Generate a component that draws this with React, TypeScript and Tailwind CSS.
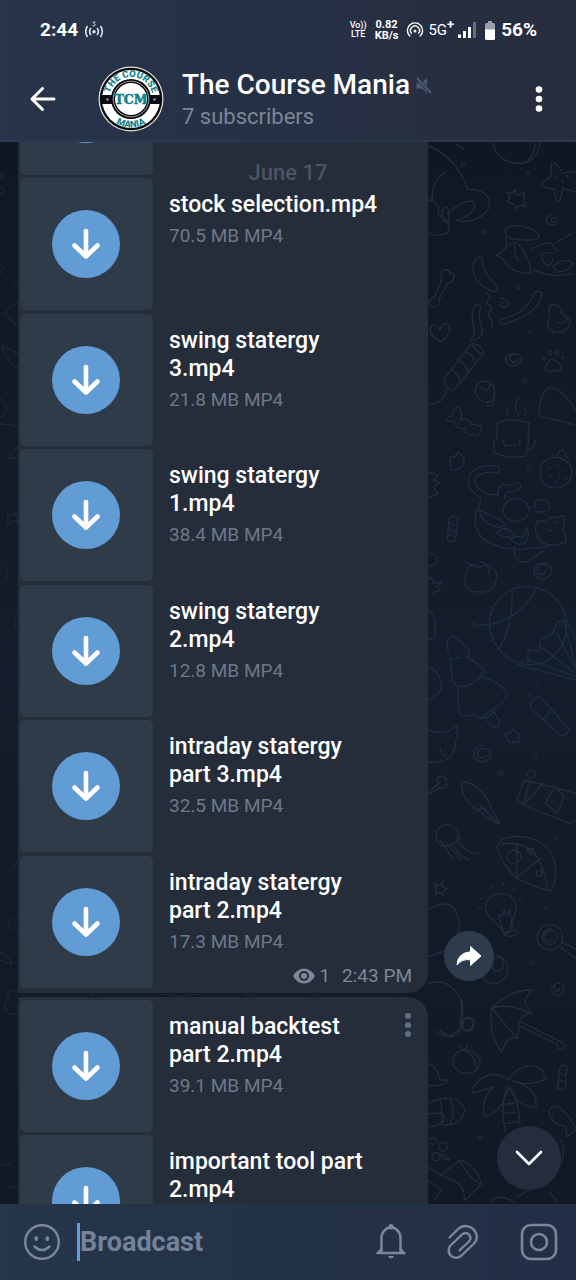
import type { ReactNode } from 'react'

interface FileItem {
  name: string
  size: string
}

interface FileRowProps {
  file: FileItem
  menu?: boolean
  footer?: ReactNode
}

const FIRST_GROUP: FileItem[] = [
  { name: 'stock selection.mp4', size: '70.5 MB MP4' },
  { name: 'swing statergy 3.mp4', size: '21.8 MB MP4' },
  { name: 'swing statergy 1.mp4', size: '38.4 MB MP4' },
  { name: 'swing statergy 2.mp4', size: '12.8 MB MP4' },
  { name: 'intraday statergy part 3.mp4', size: '32.5 MB MP4' },
  { name: 'intraday statergy part 2.mp4', size: '17.3 MB MP4' },
]

const SECOND_GROUP: FileItem[] = [
  { name: 'manual backtest part 2.mp4', size: '39.1 MB MP4' },
  { name: 'important tool part 2.mp4', size: '' },
]

function Wallpaper() {
  return (
    <svg
      className="absolute inset-0 h-full w-full"
      viewBox="0 142 576 1062"
      preserveAspectRatio="xMaxYMin slice"
      fill="none"
      stroke="#232c3a"
      strokeWidth="4"
      strokeLinecap="round"
      strokeLinejoin="round"
      aria-hidden="true"
    >
      <g transform="translate(420 140) scale(.3333)">
        {/* whale, ball, starfish */}
        <path d="M24 18c60 20 105 80 118 130 30 0 66 8 66 44 0 34-50 58-100 50 20-6 58-24 56-46-4-26-44-10-78 24M36 182c0-40 14-70 40-86M24 180c30 6 36 26 30 44 26 8 40 30 28 54-20 12-44 10-58 0M70 204q20-6 14 16 10 24-10 26-14-20-4-42" />
        <path d="M220 12c6 36 40 60 80 58 34-2 60-30 58-62M345 12q0 28-20 46M110 14l20 12" />
        <path d="M400 66q22 16 26 34 20-6 42-4M394 70q2 24-4 42-20 10-26 22 12 14 38 12l6 36q10 8 14-10l6-26 40 10M406 110l4 6M426 120l4 6M440 106l6 6" />
        <path d="M284 148l6 18 24-8-4 22 6 18-18-2-10 10-8-14-18-6 8-14-10-16 18 4zM398 224c-18-6-28 26-6 30 24 4 24-26 6-20-12 6-2 18 4 8" />
        {/* sleeping cat */}
        <path d="M260 262c30-12 90 0 98 30-12 14-80 10-98-4-6-10-4-20 0-26zM258 290q4 22 0 34l-28 22q26 10 30 28 30 30 74 26-10-60-44-92-20 2-34 14M284 306q-4 40 12 58M334 330q20-20 58-22l20 26M412 306l44-26M400 340q-50-10-30 24 20 24 28-4M400 380q30-30 60-10-10 26-50 26zM340 388q50 28 120 12" />
        {/* bone, streamers, chick */}
        <path d="M66 418c-12-24 14-40 24-20 20 0 14 30-6 30L56 480q4 20-16 22-14-6-14-18l18-14zM162 366q10-22 26-10-6 34 40 80 6 22-8 18-40-10-58-50-6-20 0-38zM160 506q10-20 22-8-10 34 6 72 0 26-36 32 16-20 10-40-10-30-2-56zM340 464q10-18 26-4-4 60-118 94-16-6-8-16 80-16 100-74zM200 460q14 8 4 18-6 10 4 18 12 10 2 20t2 20 0 30" />
        <path d="M386 512c0-26 38-24 38 2-6 14 20 10 26 30 0 40-60 44-68 8 0-20 16-18 4-40zM412 546q20 12 32-12M400 574v8M428 574v8M240 476c26-6 34 24 12 26-20-4-8-20 0-12M40 556c-20 10-8 34 24 50 34-30 28-60 8-54-10 6-12 20-14 20-2-14-8-20-18-16z" />
        <path d="M72 718l82-106q30-2 38 26l-90 112q-28 0-30-32zM94 690q24 10 26 40M116 662q26 10 28 38M136 636q28 8 30 38M160 612q0 22 30 30M80 750q-10 44-56 44" />
        <path d="M280 640c-34 4-28 40 2 38 32-6 28-46-6-34-20 16 10 34 18 14M386 664q-20 24 0 30 22-4 34 0 10-24-14-32-8-12-20 2zM372 652q-8 6 2 8zM388 632q-6 14 4 14 8-14-4-14zM410 630q-8 14 2 14 8-10-2-14zM428 650q-8 6 4 2" />
        <path d="M170 766c-20-50 56-60 54-8 0 40-38 34-54 8zM180 740q20 24 32-8M206 782l-4 16 18 2v-18M78 842q4-16 22-14-4-20 14-28 16 16 8 40 24-10 30 12l32 6q0 40-30 26-24-4-20-20-24 6-32-20zM356 830q4-76 30-86 40-4 82 70M356 830q50 6 106 24M232 848l-2 50M232 848q40-16 96 0l-4 50M262 826q-6-12 2-20M296 824q-20-20 0-54M314 826q10-12-2-24" />
      </g>

      <g transform="translate(420 440) scale(.3333)" stroke="#202d41">
        {/* mug, berry */}
        <path d="M222 0v38q40 20 96 10l8-48M326 30q18-4 20-28M250 0l4 18 46-4-2-14M90 50q20 2 24-14 28 20 14 42-16 16-36 10zM364 76q20-30 54-22 40 12 38 48-8 44-62 40-42-10-30-66zM412 50q4-24 18-20l6 16 10 14M386 80l4 6M410 76l4 6M434 90l4 6M390 106l4 6M416 102l4 6M440 112l-4 6M406 124l4 4" />
        {/* cat with a ring */}
        <path d="M236 98q6-18-10-20c-60-2-84 16-80 56q10 24 36 40l-4 24c-20 30-18 74 18 104q60 34 130 24l60-6M236 98q-60-6-72 20 6 34 40 44l30 4q0-30 16-34 28 6 30 0 24-10 22 10-4 12-36 14-16 0-12 20M250 210a38 34 0 1 0 76 0 38 34 0 1 0-76 0M326 200q14 6 20 0-8-22 20-22 30 6 20 32-20 10-40 4M178 208q30 20 60 30 34 20-4 24-36-8-50-32zM230 280q20-24 44-6l6 20-30-4zM352 242q30 4 36-8l46-6-4 44q12 24 6 36-60 20-82-16-14-20-2-50zM376 250l12-4M404 246l12 4M384 272h10M282 320l2 30q26 30 50 6l38-24M274 300q10-20 36-6l10-30q10 20 0 40-20 20-46-4" />
        <path d="M82 300l6-66q18-12 26 4l-8 62q-12 10-24 0zM90 250l18 6M88 268l18 6M86 284l18 6M150 376q10-6 26 6 40-20 54 20 0 50-40 54-60 4-54-40 0-24 14-34zM140 368q20 10 40 16M180 364q30 6 28 40M380 370c-50-6-48 46-12 48 36-6 34-54-6-44-26 20 6 44 14 20" />
        {/* air balloon */}
        <path d="M330 440c-80-4-124 60-122 116 4 60 50 110 112 118 90 4 120-70 120-120-4-60-50-112-110-114zM276 452c4 60-10 130-42 180M348 448c-30 60-90 110-180 108M440 540l-30 6-10 36-40 16v34h-36v40M440 540l28 60M410 580l58 110M362 620l106 80M326 660l142 50M290 674l178 46M430 540l38 140" />
        <path d="M84 600q4-14 20-10l44 40-6 22q50 30 52 44l-18 10q60 16 86 54 4 14-16 24 0 14-20 16 0 12-18 30l-20 4q-20 0-22-14-20 10-42 8-12-20-10-90-20-10-18-30l-6-60q-12-20-6-48zM92 658l30-6M120 740q30 0 62-28M190 830l28-22 22 38q-4 16-20 14z" />
        <path d="M330 790q10-16 30-20l86 96q-4 22-22 22l-90-80zM390 810q-10 26-26 26M354 716v4M354 736v12M322 760l8 8M268 800h4M306 798h4M24 510q30 20 20 84l-20 6M24 680q40 16 40 60-4 30-40 40M24 870q50 20 88-14v44M24 96l30 10-14 16 18 6-18 14 14 20-30 10M24 340q30 0 28 24-10 16-28 12M24 420l10-8 6 18 24-4-12 14 10 14h-18l-4 14M254 880l18-2 8-12 8 12 14 4-8 10 6 14h-34z" />
      </g>

      <g transform="translate(420 740) scale(.3333)" stroke="#222d3e">
        {/* squid, jellyfish */}
        <path d="M188 16c-34 2-38 48 0 50 34-2 28-50-4-40-24 10-6 40 14 22M24 66q80 10 84-66M60 20q0 20 20 30M24 160l34-32q-16-20 10-20 14 12 10 16 10 26-20 20l-34 20M124 126q50 0 82 60l32 64q-20 0-64-40-50-30-50-84zM180 196l50 50M170 214q20-20 30 0M50 300q-8-40 30-46 34 4 36 30 10 14-8 20-20 16-46 14zM60 300l40 60M80 310l44 50M96 310q20 40 50 50M110 290q20 50 64 50" />
        {/* juice box, pizza */}
        <path d="M290 180l24-60 154 40M290 180l30 20 130 50 18-10M330 120l-20 76M370 130l-60 64M320 100q10-14 26-4-4 24-20 16zM376 190l28-50 28 30-20 50zM230 320l20-24c70-20 146 10 156 80q4 50-12 76-20 0-104-36-50-50-60-96zM244 312c60-10 120 6 140 140M290 310v104l74-60M262 350a20 20 0 1 0 40 0 20 20 0 1 0-40 0M320 330l20-6-6 20zM348 396l16-6 4 16-16 4z" />
        {/* light bulb */}
        <path d="M206 530c-24-40 4-70 38-70 36 0 54 34 40 64-10 20-14 30-14 46l-20 10q-14-30-44-50zM250 572l-16-50 14 8 4-20 10 18 8-16 8 52M252 582l36-12q8 16-12 18-16 4-24-6M180 476h8M176 506h8M218 446v-8M250 436v-8M280 448l6-6M298 478l6-4" />
        <path d="M352 592a38 38 0 1 0 76 0 38 38 0 1 0-76 0M390 566c-40 14-20 56 8 46 30-20 4-54-20-34-16 20 10 34 20 20M428 608l40 20M422 622l46 34M24 510q80-50 94 40 0 80-94 100M410 730c-24 10-16 42 10 36 24-16 4-50-16-32-6 20 16 24 16 10M190 714q10 20 40 16 40-10 30-60-10-20-34-26M218 670a16 16 0 1 0 30 6 16 16 0 1 0-30-6M24 730q70-20 104 60l-8 60q10 16-10 36-20 14-50-16M130 850a16 16 0 1 0 30 6 16 16 0 1 0-30-6M44 430l16 8 8-14 2 18 12 4-12 6v14l-10-8-14 6 4-14z" />
      </g>

      <g transform="translate(400 1000) scale(.3333)">
        {/* umbrella, palm tree, candy, fish */}
        <path d="M276 24q50-54 120-54-24 24-20 42l20 30q-16-8-40 22 2 30-4 50-30-10-48 42-42-60-28-132zM276 24q50-16 120 18M276 24q30 40 76 90M360 64l120 60q20 10 12 24M356 76l114 56q4 16 14 16M180 0q20 60-6 90-30 34-70 4M188 70a16 14 0 1 0 30 6 16 14 0 1 0-30-6M162 170q20-30 40-18 40 4 38 40-10 34-50 26-40-10-28-48zM180 140l10 12M202 134l-6 18M200 154q30 20 30 58" />
        <path d="M328 240q-60-40-104 16-10 14-4 24l60-20q-40 40-26 90 50-10 74-90 20 60 80 62 6-60-70-80 40 20 100-4-10-50-60-38-40 10-50 40zM320 264q-20 60-4 132M340 274q20 60 20 100M316 340l30-4M314 312l30-2M316 370l40-4M480 200q10-10 22 0l-6 64q-12 10-24 0zM478 220l18 6M476 240l18 6M448 330q10-20 40 0 30 30 40 60l-28 20q0-20-4-30-50-10-48-50zM458 340v4" />
        <path d="M84 190q30 10 36 50h24q-10 20-60 16M84 310q90-40 110 20-10 50-70 44M84 342q50-10 50 14-10 24-50 24M120 300q10 30 4 70M150 296q20 40 0 74M90 420q10-10 20 0-4 20-20 10M116 440a12 12 0 1 0 26 0 12 12 0 1 0-26 0M96 470a12 12 0 1 0 24 0 12 12 0 1 0-24 0M124 464q20 0 24 16-20 0-24-16M130 520l50-40q50 20 64 72l-50 50M180 480q20 50 60 70M84 500l30 20 40 20q40 10 40 60M84 540l40 30-20 30M270 606q30-30 70 0M350 590q60-30 130-90 20-50 0-80M450 580l24 26" />
      </g>

      {/* left gutter */}
      <path
        strokeWidth="1"
        d="M0 172q5 4 0 8M0 186q6 4 4 8H0M0 264l3 4-3 6M14 282l3 3M19 302q-10 4-14 12l14 14M2 346l17 8M2 348q8 18 17 20M0 398q8 6 6 14l-6 6M0 424q12 0 18 3M18 446l-10 12 10 1M8 514l4 2 4-4v6l2 4-5-1-5 4v-6zM0 562q6 2 8 14l-4 4M19 610q-8 10-3 18M18 860l-6 10M18 918q-10 0-10 6 2 8 10 6M0 952q10 4 12 12L0 960M18 990q-12 0-10 10-8 6 2 14h8M2 1164l6 2 3-4M8 1188l5-2 5 2M90 996l6-4 4 4M160 994l20 2 20-2M245 995h10M310 994l8 2M395 994q8-6 14 0"
      />
      <g strokeWidth="1">
        <circle cx="463" cy="165" r="2" />
        <circle cx="528" cy="173" r="2" />
        <circle cx="484" cy="232" r="2" />
        <circle cx="518" cy="287" r="2" />
        <circle cx="530" cy="332" r="2" />
        <circle cx="525" cy="381" r="2" />
        <circle cx="529" cy="467" r="2" />
        <circle cx="474" cy="625" r="2" />
        <circle cx="535" cy="757" r="2" />
        <circle cx="501" cy="773" r="2" />
        <circle cx="556" cy="838" r="2" />
        <circle cx="546" cy="908" r="2" />
        <circle cx="532" cy="963" r="2" />
        <circle cx="480" cy="1138" r="2" />
      </g>
    </svg>
  )
}

function ChannelLogo() {
  return (
    <svg viewBox="0 0 66 66" className="h-[66px] w-[66px] shrink-0" role="img" aria-label="The Course Mania">
      <defs>
        <path id="arc-top" d="M11 33a22 22 0 0 1 44 0" />
        <path id="arc-bottom" d="M4.500 33a28.500 28.500 0 0 0 57 0" />
      </defs>
      <circle cx="33" cy="33" r="32.500" fill="#e9e3df" />
      <circle cx="33" cy="33" r="31.300" fill="#0c0d10" />
      <circle cx="33" cy="33" r="29" fill="#fff" />
      <path d="M4 29h12v9H4zM50 29h12v9H50z" fill="#0c0d10" />
      <circle cx="33" cy="33" r="20" fill="#0c0d10" />
      <circle cx="33" cy="33" r="17.800" fill="none" stroke="#fff" strokeWidth=".6" />
      <circle cx="33" cy="33" r="16" fill="#fff" />
      <circle cx="9.500" cy="33.500" r="1.300" fill="#7d9098" />
      <circle cx="56.500" cy="33.500" r="1.300" fill="#7d9098" />
      <g fill="#16828a" fontFamily="Roboto, sans-serif" fontWeight="900" textAnchor="middle">
        <text fontSize="9.500">
          <textPath href="#arc-top" startOffset="50%">THE COURSE</textPath>
        </text>
        <text fontSize="9.500">
          <textPath href="#arc-bottom" startOffset="50%">MANIA</textPath>
        </text>
        <text x="33" y="37.500" fontSize="12.500" fontFamily="DejaVu Serif, serif" stroke="#16828a" strokeWidth=".6">TCM</text>
      </g>
    </svg>
  )
}

function StatusBar() {
  return (
    <div className="flex h-[60px] items-center pl-10 pr-[39px] text-white">
      <span className="text-[19px] font-bold leading-6">2:44</span>
      <svg viewBox="0 0 20 18" className="ml-1.5 h-[18px] w-5" fill="none" stroke="#dfe4ea" strokeWidth="1.600" strokeLinecap="round">
        <path d="M3.200 5.500q-3 5 0 10M6.600 7.500q-2 3 0 6M16.800 5.500q3 5 0 10M13.400 7.500q2 3 0 6" />
        <circle cx="10" cy="10.800" r=".9" fill="#fff" />
        <path d="M8.800 1h2.400l-1.400 1.800q2 .2 1.300 1.700-1 1.300-2.400.3" strokeWidth=".8" />
      </svg>

      <div className="ml-auto flex items-center">
        <div className="flex flex-col items-center text-[9px] font-medium leading-[9px]">
          <span>Vo))</span>
          <span>LTE</span>
        </div>
        <div className="ml-2 flex flex-col items-center text-[11px] font-bold leading-[11px]">
          <span>0.82</span>
          <span>KB/s</span>
        </div>
        <svg viewBox="0 0 18 18" className="ml-2 h-[18px] w-[18px]" fill="none" stroke="#fff" strokeWidth="1.400" strokeLinecap="round">
          <path d="M3.800 15a7.600 7.600 0 1 1 10.400 0M5.400 12.200a4.500 4.500 0 1 1 7.200 0" />
          <circle cx="9" cy="10" r="1.500" fill="#fff" stroke="none" />
        </svg>
        <span className="ml-1 text-[15px] leading-5">5G<sup className="text-[13px] font-bold">+</sup></span>
        <svg viewBox="0 0 18 16" className="ml-1 h-4 w-[18px]" fill="#fff">
          <rect x="0" y="12.500" width="3" height="3.500" />
          <rect x="5" y="9" width="3" height="7" />
          <rect x="10" y="5" width="3" height="11" />
          <rect x="15" y="0" width="3" height="16" fill="#667084" />
        </svg>
        <svg viewBox="0 0 10 19" className="ml-[9px] h-[19px] w-2.5">
          <path d="M3 0h4v2h1.500Q10 2 10 3.500V9H0V3.500Q0 2 1.500 2H3z" fill="#9aa0aa" />
          <path d="M0 8.500h10v9q0 1.500-1.500 1.500h-7Q0 19 0 17.500z" fill="#fff" />
        </svg>
        <span className="ml-[6px] text-[19px] font-bold leading-6">56%</span>
      </div>
    </div>
  )
}

function Header() {
  return (
    <header className="shrink-0 border-b-2 border-[#293950] bg-linear-to-r from-[#27344a] via-[#263044] to-[#282c40]">
      <StatusBar />
      <div className="flex h-20 items-center pb-0.5 pl-[29px] pr-[27px]">
        <button type="button" aria-label="Back">
          <svg viewBox="0 0 28 26" className="h-[26px] w-7" fill="none" stroke="#fff" strokeWidth="3" strokeLinecap="round" strokeLinejoin="round">
            <path d="M25 13H3M13.500 2.500 3 13l10.500 10.500" />
          </svg>
        </button>
        <div className="ml-[41px] flex min-w-0 flex-1 items-center gap-[18px]">
          <ChannelLogo />
          <div className="min-w-0 pt-1">
            <h1 className="flex items-center gap-1.5 text-[28px] font-medium leading-8 text-white">
              The Course Mania
              <svg viewBox="0 0 16 17" className="h-[17px] w-4" fill="#4d5b6e">
                <path d="M11 1v15l-5-4.500H.5v-6H6z" />
                <path d="M1 1l14 15" stroke="#263044" strokeWidth="4" />
                <path d="M1 1l14 15" stroke="#4d5b6e" strokeWidth="2" />
              </svg>
            </h1>
            <p className="text-[22px] leading-8 text-[#7b8596]">7 subscribers</p>
          </div>
        </div>
        <button type="button" aria-label="More options">
          <svg viewBox="0 0 20 26" className="h-[26px] w-5" fill="#fff">
            <circle cx="10" cy="3.500" r="3.300" />
            <circle cx="10" cy="13" r="3.300" />
            <circle cx="10" cy="22.500" r="3.300" />
          </svg>
        </button>
      </div>
    </header>
  )
}

function FileRow({ file, menu, footer }: FileRowProps) {
  return (
    <li className="flex h-[132px] odd:mb-[3px] even:mb-1">
      <div className="flex w-[133px] shrink-0 items-center justify-center rounded-[5px] bg-[#303b4a] pr-0.5">
        <button type="button" aria-label={`Download ${file.name}`} className="flex h-[68px] w-[68px] items-center justify-center rounded-full bg-[#629cd5]">
          <svg viewBox="0 0 30 32" className="h-8 w-[30px]" fill="none" stroke="#fff" strokeWidth="4.600" strokeLinecap="round" strokeLinejoin="round">
            <path d="M15 3v25M3.500 17.500 15 28.500l11.500-11" />
          </svg>
        </button>
      </div>
      <div className="flex min-w-0 flex-1 flex-col pl-4 pr-4 pt-[13px]">
        <div className="flex items-start">
          <h2 className="min-w-0 flex-1 text-[23px] font-medium leading-7 text-white">{file.name}</h2>
          {menu ? (
            <button type="button" aria-label="File options" className="flex w-8 shrink-0 justify-end">
              <svg viewBox="0 0 8 26" className="h-[26px] w-2" fill="#5d7186">
                <circle cx="4" cy="3" r="3" />
                <circle cx="4" cy="12" r="3" />
                <circle cx="4" cy="21" r="3" />
              </svg>
            </button>
          ) : (
            <span className="w-8 shrink-0" />
          )}
        </div>
        <p className="mt-[5px] text-[19px] leading-6 text-[#6e7888]">{file.size}</p>
        {footer}
      </div>
    </li>
  )
}

function SeenAt() {
  return (
    <div className="mt-auto flex items-center self-end text-[19px] leading-6 text-[#7d8797]">
      <svg viewBox="0 0 22 16" className="mr-1 h-4 w-[22px]">
        <path d="M0 8Q4 .5 11 .5T22 8q-4 7.500-11 7.500T0 8z" fill="#7d8797" />
        <circle cx="11" cy="8" r="5" fill="#252d3b" />
        <circle cx="11" cy="8" r="3" fill="#7d8797" />
      </svg>
      <span>1</span>
      <time className="ml-3">2:43 PM</time>
    </div>
  )
}

function Messages() {
  return (
    <main className="relative min-h-0 flex-1 overflow-hidden bg-linear-to-b from-[#111722] via-[#141d2b] to-[#121824]">
      <Wallpaper />

      <div className="relative flex flex-col gap-1 pl-[18px]">
        <div className="flex items-end">
          {/* pulled up so the list starts in the middle of an earlier file */}
          <ul className="-mt-[99px] min-w-0 flex-1 rounded-br-[20px] bg-[#252d3b] pb-0.5 pl-0.5">
            <FileRow file={{ name: '', size: '' }} />
            {FIRST_GROUP.map((file, i) => (
              <FileRow key={file.name} file={file} footer={i === FIRST_GROUP.length - 1 ? <SeenAt /> : undefined} />
            ))}
          </ul>
          <div className="w-[148px] shrink-0 pb-3 pl-4">
            <button type="button" aria-label="Share" className="flex h-[50px] w-[50px] items-center justify-center rounded-full bg-[#2e3b4c]">
              <svg viewBox="0 0 26 22" className="h-[22px] w-[26px]" fill="#fff" stroke="#fff" strokeWidth="1" strokeLinejoin="round">
                <path d="M14.500 1.500 25 11 14.500 20.500v-5.700Q6 13.500 1 20 1.500 8 14.500 6.800z" />
              </svg>
            </button>
          </div>
        </div>

        <ul className="mr-[148px] rounded-tr-[20px] bg-[#252d3b] pl-0.5 pt-[3px]">
          {SECOND_GROUP.map((file, i) => (
            <FileRow key={file.name} file={file} menu={i === 0} />
          ))}
        </ul>
      </div>

      <div className="absolute inset-x-0 top-[15px] flex justify-center">
        <span className="rounded-full px-3 text-[22px] font-medium leading-8 text-[#4c5463]">June 17</span>
      </div>

      <button type="button" aria-label="Scroll to latest" className="absolute bottom-3.5 right-[15px] flex h-16 w-16 items-center justify-center rounded-full bg-[#242d3d]">
        <svg viewBox="0 0 28 16" className="h-4 w-7" fill="none" stroke="#fff" strokeWidth="2.600" strokeLinecap="round" strokeLinejoin="round">
          <path d="M2 2l12 12L26 2" />
        </svg>
      </button>
    </main>
  )
}

function Composer() {
  return (
    <footer className="flex h-[76px] shrink-0 items-center bg-linear-to-r from-[#26354a] via-[#243248] to-[#222e45] pl-6 pr-[18px]">
      <button type="button" aria-label="Emoji">
        <svg viewBox="0 0 36 36" className="h-9 w-9" fill="none" stroke="#7a879b" strokeWidth="2.400" strokeLinecap="round">
          <circle cx="18" cy="18" r="16.800" />
          <path d="M10.500 22.500q7.500 7 15 0" />
          <ellipse cx="12.300" cy="14.500" rx="1.900" ry="2.500" fill="#7a879b" stroke="none" />
          <ellipse cx="23.300" cy="14.500" rx="1.900" ry="2.500" fill="#7a879b" stroke="none" />
        </svg>
      </button>
      <input
        type="text"
        aria-label="Message"
        placeholder="Broadcast"
        className="ml-[17px] h-[38px] min-w-0 flex-1 border-l-[3px] border-[#5c9fdc] bg-transparent text-[27px] font-bold text-white outline-none placeholder:text-[#74829a]"
      />
      <div className="flex items-center gap-[41px] text-[#7a879b]">
        <button type="button" aria-label="Notifications">
          <svg viewBox="0 0 30 36" className="h-9 w-[30px]" fill="none" stroke="currentColor" strokeWidth="2.400" strokeLinecap="round" strokeLinejoin="round">
            <path d="M1.500 29h27M5.500 28.500V14a9.500 10.500 0 0 1 19 0v14.500" />
            <path d="M5.500 25 2 29M24.500 25l3.500 4" />
            <circle cx="15" cy="2.800" r="1.500" fill="currentColor" />
            <path d="M12 32h6q-1 2.500-3 2.500T12 32z" fill="currentColor" stroke="none" />
          </svg>
        </button>
        <button type="button" aria-label="Attach">
          <svg viewBox="0 0 32 36" className="h-9 w-8" fill="none" stroke="currentColor" strokeWidth="2.400" strokeLinecap="round" strokeLinejoin="round">
            <path d="M2.500 13.500 11 5.200q3-3.200 7.500-3.200 6 .2 9.300 5 4.500 7-.8 12.500L14.500 31.500q-4.500 4-9.500 1-5.500-4-2-10.500L15 10.500q3.500-2.800 7 0 3 3.500 0 7L12.500 26.500" />
          </svg>
        </button>
        <button type="button" aria-label="Camera">
          <svg viewBox="0 0 38 38" className="h-[38px] w-[38px]" fill="none" stroke="currentColor" strokeWidth="2.600">
            <rect x="2" y="2" width="34" height="34" rx="9" />
            <circle cx="19" cy="19" r="8" />
          </svg>
        </button>
      </div>
    </footer>
  )
}

export default function App() {
  return (
    <div className="flex h-screen flex-col overflow-hidden bg-[#121824] font-[Roboto,sans-serif]">
      <Header />
      <Messages />
      <Composer />
    </div>
  )
}
